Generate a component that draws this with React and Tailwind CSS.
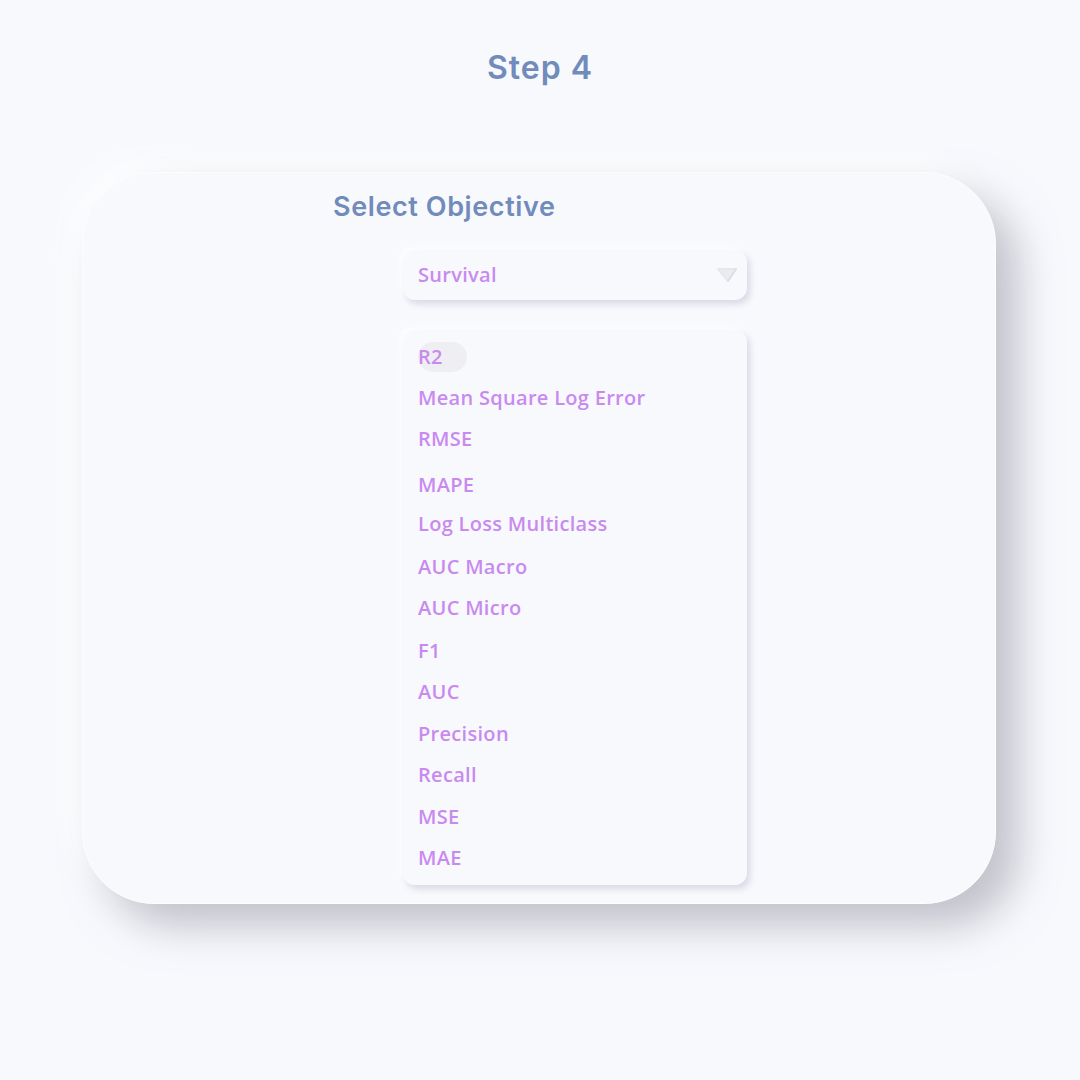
import React from "react";

const items = [
  ["R2", 357],
  ["Mean Square Log Error", 398],
  ["RMSE", 440],
  ["MAPE", 486],
  ["Log Loss Multiclass", 525],
  ["AUC Macro", 569],
  ["AUC Micro", 610],
  ["F1", 653],
  ["AUC", 694],
  ["Precision", 737],
  ["Recall", 778],
  ["MSE", 820],
  ["MAE", 862],
];

export default function App() {
  const rows = items.map(([label, cy], i) => {
    const next = i < items.length - 1 ? items[i + 1][1] : cy + 42;
    return { label, h: next - cy };
  });
  return (
    <div className="w-[1080px] h-[1080px] bg-[#f7f9fd] flex flex-col items-center overflow-hidden" style={{ fontFamily: "Inter, sans-serif" }}>
      <div className="mt-[48px] h-[40px] flex items-center text-[32px] font-semibold text-[#718bbb] tracking-[1px]">Step 4</div>
      <div className="mt-[84px] ml-[-2px] w-[914px] h-[732px] rounded-[72px] bg-[#f8f9fd] border-[1px] border-[#fcfdff] shadow-[22px_22px_40px_rgba(150,150,160,0.55),-12px_-12px_30px_rgba(255,255,255,0.9)] flex flex-col">
        <div className="ml-[250px] mt-[16px] h-[36px] flex items-center text-[27px] font-semibold text-[#718bbb] tracking-[0.6px]">Select Objective</div>
        <div className="ml-[320px] mt-[25px] w-[344px] h-[50px] rounded-[12px] bg-[#f8f9fd] shadow-[3px_4px_6px_rgba(180,180,200,0.45),-3px_-3px_6px_rgba(255,255,255,0.9)] flex items-center justify-between pl-[15px] pr-[8px]" style={{ fontFamily: "'Open Sans', sans-serif" }}>
          <span className="text-[20px] font-semibold text-[#c98af0] tracking-[0.3px]">Survival</span>
          <svg width="24" height="20" viewBox="0 0 24 20">
            <path d="M3 4 L21 4 L13 16 Z" fill="#ececf0" stroke="#e6e6ec" strokeWidth="2" strokeLinejoin="round" />
            <path d="M21 4 L13 16" stroke="#dcdce4" strokeWidth="1.5" strokeLinecap="round" />
          </svg>
        </div>
        <div className="ml-[320px] mt-[30px] w-[344px] h-[555px] rounded-[12px] bg-[#f8f9fd] shadow-[3px_4px_6px_rgba(180,180,200,0.45),-3px_-3px_6px_rgba(255,255,255,0.9)] flex flex-col pt-[12px] pl-[15px]" style={{ fontFamily: "'Open Sans', sans-serif" }}>
          {rows.map((r, i) => (
            <div key={r.label} className="flex items-start" style={{ height: r.h }}>
              <span className={"text-[20px] font-semibold text-[#c98af0] tracking-[0.3px] leading-[30px] " + (i === 0 ? "bg-[#efeff3] rounded-full pr-[24px]" : "")}>{r.label}</span>
            </div>
          ))}
        </div>
      </div>
    </div>
  );
}
